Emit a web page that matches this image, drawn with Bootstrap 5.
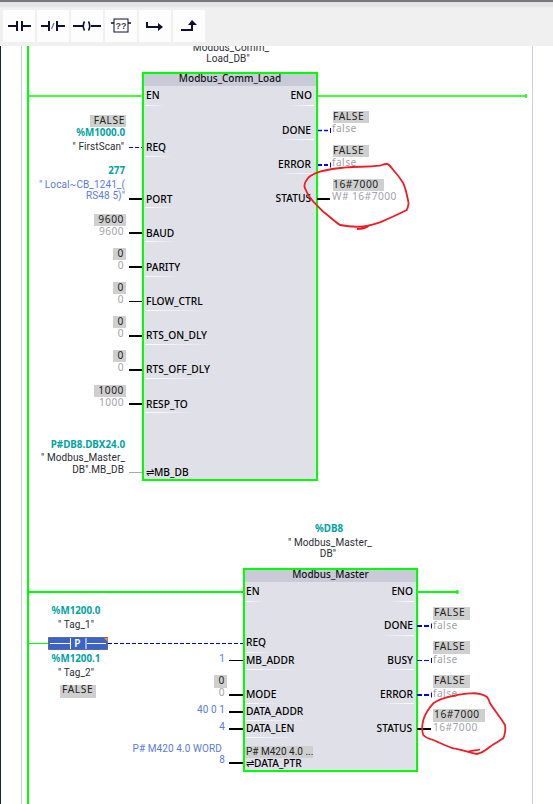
<!doctype html>
<html lang="en"><head><meta charset="utf-8"><title>Modbus FBD</title>
<link href="https://cdn.jsdelivr.net/npm/bootstrap@5.3.0/dist/css/bootstrap.min.css" rel="stylesheet">
<style>
html,body{height:804px;overflow:hidden;background:#fff}
.top-strip{height:7px;background:#e4e4e6;border-top:2px solid #77787c}
.tool-bar{height:39px;padding:3px 3px 0;background:#f0f0f0;position:relative;z-index:3}
.tool-btn{width:32px;height:32px;padding:0;border:0;border-radius:0;background:#fdfdfd;display:flex;align-items:center;justify-content:center}
.tool-group{gap:2px}
.canvas-area{height:758px;position:relative;overflow:hidden;background:#fff;border-left:1px solid #1a2233}
.fbd-block{position:absolute;border:2px solid #00ff00;background:#e0e0e8}
#blockA{left:141px;top:26px;width:176px;height:409px}
#blockB{left:242px;top:522px;width:175px;height:204px}
.fbd-head{height:12px;background:#c8cad8;text-align:center;font:500 10px/9px "Noto Sans",sans-serif;color:#111}
.wires{position:absolute;left:-1px;top:-46px;width:553px;height:804px}
.wires text{font:10.2px "Noto Sans",sans-serif;fill:#111}
.wires .pin{font-weight:500;fill:#000}
.wires .addr{font:700 9.8px "Noto Sans",sans-serif;fill:#00a3a3}
.wires .sym{font:10px Roboto,sans-serif;fill:#2c2c34;letter-spacing:.1px}
.wires .lit{font:10px Roboto,sans-serif;fill:#5a7be0;letter-spacing:.1px}
.wires .cur{fill:#a2a2aa;letter-spacing:.45px}
.wires .val{fill:#222;letter-spacing:.6px}
.wires .cut{font:10px Roboto,sans-serif;fill:#222}
.wires .plc{fill:#fff;font-weight:600}
</style></head><body>
<div class="top-strip"></div>
<div class="tool-bar">
 <div class="d-flex tool-group">
 <button class="btn tool-btn" aria-label="NO contact"><svg width="26" height="14" viewBox="0 0 26 14"><path d="M2 7h9M11 2v10M16 2v10M16 7h9" stroke="#0d1030" stroke-width="2" fill="none"/></svg></button>
 <button class="btn tool-btn" aria-label="NC contact"><svg width="26" height="14" viewBox="0 0 26 14"><path d="M1 7h8M9 2v10M17 2v10M17 7h8" stroke="#0d1030" stroke-width="2" fill="none"/><path d="M11.500 10l2.500-6" stroke="#777" stroke-width="1.300"/></svg></button>
 <button class="btn tool-btn" aria-label="Coil"><svg width="30" height="14" viewBox="0 0 30 14"><path d="M1 7h10M19 7h10" stroke="#0d1030" stroke-width="2" fill="none"/><path d="M12.500 2.500q-2.500 4.500 0 9M16.500 2.500q2.500 4.500 0 9" stroke="#0d1030" stroke-width="1.600" fill="none"/></svg></button>
 <button class="btn tool-btn" aria-label="Empty box"><svg width="20" height="16" viewBox="0 0 20 16"><path d="M0 5h3M17 5h3" stroke="#0d1030" stroke-width="1.500"/><rect x="3" y="1" width="14" height="13" fill="#fff" stroke="#0d1030"/><text x="10" y="11" text-anchor="middle" font-family="Liberation Sans" font-size="9" font-weight="700" fill="#444">??</text></svg></button>
 <button class="btn tool-btn" aria-label="Open branch"><svg width="18" height="12" viewBox="0 0 18 12"><path d="M1 2v5h12" stroke="#0d1030" stroke-width="2" fill="none"/><path d="M12 3l5 4-5 4z" fill="#0d1030"/></svg></button>
 <button class="btn tool-btn" aria-label="Close branch"><svg width="18" height="14" viewBox="0 0 18 14"><path d="M1 11h11V4" stroke="#0d1030" stroke-width="2" fill="none"/><path d="M8 6l4-5 5 5z" fill="#0d1030"/></svg></button>
 </div>
</div>
<div class="canvas-area">
 <div id="blockA" class="fbd-block"><div class="fbd-head">Modbus_Comm_Load</div></div>
 <div id="blockB" class="fbd-block"><div class="fbd-head">Modbus_Master</div></div>
 <svg class="wires" viewBox="0 0 553 804" aria-label="Function block network">
  <defs><linearGradient id="fade"><stop offset="0" stop-color="#fff"/><stop offset="1" stop-color="#fff" stop-opacity="0"/></linearGradient>
  <linearGradient id="fadeR"><stop offset="0" stop-color="#fff" stop-opacity="0"/><stop offset="1" stop-color="#fff"/></linearGradient></defs>
  <path d="M21.500 46V804M532.500 46V804" stroke="#c9c9ea" stroke-width="1"/>
  <path d="M28 46V804" stroke="#00ff00" stroke-width="2"/>
  <path d="M28 96H142M317 96H526M526 94V98" stroke="#00ff00" stroke-width="1.600"/>
  <path d="M28 592H243M417 592H458" stroke="#00ff00" stroke-width="2"/><path d="M457.500 590V594" stroke="#00ff00" stroke-width="2"/>
  <g fill="url(#fade)">
   <rect x="145" y="105" width="20" height="1"/><rect x="145" y="156" width="28" height="1"/><rect x="145" y="207" width="30" height="1"/><rect x="145" y="241" width="30" height="1"/><rect x="145" y="276" width="35" height="1"/><rect x="145" y="310" width="60" height="1"/><rect x="145" y="344" width="68" height="1"/><rect x="145" y="378" width="70" height="1"/><rect x="145" y="412" width="50" height="1"/>
   <rect x="245" y="601" width="18" height="1"/><rect x="245" y="652" width="28" height="1"/><rect x="245" y="669" width="55" height="1"/><rect x="245" y="703" width="35" height="1"/><rect x="245" y="720" width="60" height="1"/><rect x="245" y="737" width="50" height="1"/>
  </g>
  <g fill="url(#fadeR)">
   <rect x="290" y="105" width="24" height="1"/><rect x="280" y="139" width="34" height="1"/><rect x="280" y="173" width="34" height="1"/>
   <rect x="390" y="601" width="24" height="1"/><rect x="380" y="635" width="34" height="1"/><rect x="380" y="669" width="34" height="1"/><rect x="380" y="703" width="34" height="1"/>
  </g>
  <rect x="90" y="115" width="36" height="12" fill="#cfcfcf"/>
  <text class="val" x="125" y="124" text-anchor="end">FALSE</text>
  <text class="addr" x="125" y="136" text-anchor="end">%M1000.0</text>
  <text class="sym" x="124" y="150" text-anchor="end">" FirstScan"</text>
  <path d="M129 147.500H142" stroke="#0000cc" stroke-dasharray="4 2"/>
  <text class="pin" x="146" y="151">REQ</text>
  <text class="addr" x="125" y="174" text-anchor="end">277</text>
  <text class="lit" x="125" y="188" text-anchor="end">" Local~CB_1241_(</text>
  <text class="lit" x="125" y="199" text-anchor="end">RS48 5)"</text>
  <path d="M129 199H142" stroke="#000" stroke-width="2"/><text class="pin" x="146" y="203">PORT</text>
  <rect x="94" y="214" width="32" height="12" fill="#cfcfcf"/><text class="val" x="124" y="223" text-anchor="end">9600</text><text class="cur" x="124" y="235" text-anchor="end">9600</text>
  <path d="M129 233H142" stroke="#000" stroke-width="2"/><text class="pin" x="146" y="237">BAUD</text>
  <rect x="113" y="248" width="13" height="12" fill="#cfcfcf"/><text class="val" x="124" y="257" text-anchor="end">0</text><text class="cur" x="124" y="269" text-anchor="end">0</text>
  <path d="M129 267H142" stroke="#000" stroke-width="2"/><text class="pin" x="146" y="271">PARITY</text>
  <rect x="113" y="282" width="13" height="12" fill="#cfcfcf"/><text class="val" x="124" y="291" text-anchor="end">0</text><text class="cur" x="124" y="303" text-anchor="end">0</text>
  <path d="M129 301.500H142" stroke="#000"/><text class="pin" x="146" y="305">FLOW_CTRL</text>
  <rect x="113" y="316" width="13" height="12" fill="#cfcfcf"/><text class="val" x="124" y="325" text-anchor="end">0</text><text class="cur" x="124" y="337" text-anchor="end">0</text>
  <path d="M129 336H142" stroke="#000" stroke-width="2"/><text class="pin" x="146" y="339">RTS_ON_DLY</text>
  <rect x="113" y="350" width="13" height="12" fill="#cfcfcf"/><text class="val" x="124" y="359" text-anchor="end">0</text><text class="cur" x="124" y="371" text-anchor="end">0</text>
  <path d="M129 370H142" stroke="#000" stroke-width="2"/><text class="pin" x="146" y="373">RTS_OFF_DLY</text>
  <rect x="94" y="385" width="32" height="12" fill="#cfcfcf"/><text class="val" x="124" y="394" text-anchor="end">1000</text><text class="cur" x="124" y="406" text-anchor="end">1000</text>
  <path d="M129 404H142" stroke="#000" stroke-width="2"/><text class="pin" x="146" y="408">RESP_TO</text>
  <text class="addr" x="125" y="448" text-anchor="end">P#DB8.DBX24.0</text>
  <text class="sym" x="125" y="461" text-anchor="end">" Modbus_Master_</text>
  <text class="sym" x="124" y="473" text-anchor="end">DB".MB_DB</text>
  <path d="M129 472.500H142" stroke="#aaa"/><text class="pin" x="146" y="476">⇌MB_DB</text>
  <text class="pin" x="312" y="99" text-anchor="end">ENO</text>
  <text class="pin" x="311" y="134" text-anchor="end">DONE</text>
  <path d="M318 130.500H330" stroke="#0000ee" stroke-width="1.600" stroke-dasharray="4 2"/><path d="M330.500 128V133" stroke="#0000ee"/>
  <rect x="333" y="111" width="36" height="12" fill="#cfcfcf"/><text class="val" x="333" y="120">FALSE</text><text class="cur" x="332" y="132">false</text>
  <text class="pin" x="311" y="168" text-anchor="end">ERROR</text>
  <path d="M318 165H330" stroke="#0000ee" stroke-width="2" stroke-dasharray="4 2"/><path d="M330.500 162.500V167.500" stroke="#0000ee"/>
  <rect x="333" y="145" width="36" height="12" fill="#cfcfcf"/><text class="val" x="333" y="154">FALSE</text><text class="cur" x="332" y="166">false</text>
  <text class="pin" x="311" y="202" text-anchor="end">STATUS</text>
  <path d="M317 199H330" stroke="#000" stroke-width="2"/>
  <rect x="333" y="179" width="51" height="12" fill="#cfcfcf"/><text class="val" x="333" y="188">16#7000</text><text class="cur" x="332" y="200">W# 16#7000</text>
  <text class="addr" x="329" y="532" text-anchor="middle">%DB8</text>
  <text class="sym" x="330" y="546" text-anchor="middle">" Modbus_Master_</text>
  <text class="sym" x="328" y="557" text-anchor="middle">DB"</text>
  <text class="sym" x="231" y="51" text-anchor="middle">Modbus_Comm_</text>
  <text class="sym" x="228" y="62" text-anchor="middle">Load_DB"</text>
  <text class="addr" x="76" y="614" text-anchor="middle">%M1200.0</text>
  <text class="sym" x="76" y="628" text-anchor="middle">" Tag_1"</text>
  <path d="M28 643.500H48" stroke="#00ff00"/>
  <path d="M108 643.500H243" stroke="#0000cc" stroke-dasharray="4 2"/>
  <rect x="48.500" y="637.500" width="59" height="12" fill="#3a62c9" stroke="#223" stroke-dasharray="1 1"/>
  <path d="M50 643.500H70M87 643.500H106M70.500 638V649M86 638V649" stroke="#fff"/>
  <path d="M104 638h3.500v3.500z" fill="#f59a23"/>
  <text class="plc" x="77.500" y="647" text-anchor="middle">P</text>
  <text class="addr" x="76" y="662" text-anchor="middle">%M1200.1</text>
  <text class="sym" x="76" y="676" text-anchor="middle">" Tag_2"</text>
  <rect x="60" y="685" width="36" height="13" fill="#cfcfcf"/><text class="val" x="62" y="693">FALSE</text>
  <text class="pin" x="246" y="595">EN</text><text class="pin" x="146" y="99">EN</text>
  <text class="pin" x="246" y="646">REQ</text>
  <text class="lit" x="225" y="662" text-anchor="end">1</text><path d="M229 660.500H243" stroke="#000"/><text class="pin" x="246" y="664">MB_ADDR</text>
  <rect x="214" y="675" width="13" height="13" fill="#cfcfcf"/><text class="val" x="225" y="684" text-anchor="end">0</text><text class="cur" x="225" y="696" text-anchor="end">0</text>
  <path d="M229 695H243" stroke="#000" stroke-width="2"/><text class="pin" x="246" y="698">MODE</text>
  <text class="lit" x="225" y="713" text-anchor="end">40 0 1</text><path d="M229 712H243" stroke="#000" stroke-width="2"/><text class="pin" x="246" y="715">DATA_ADDR</text>
  <text class="lit" x="225" y="730" text-anchor="end">4</text><path d="M229 729H243" stroke="#000" stroke-width="2"/><text class="pin" x="246" y="732">DATA_LEN</text>
  <text class="lit" x="222" y="752" text-anchor="end">P# M420 4.0 WORD</text><text class="lit" x="225" y="763" text-anchor="end">8</text>
  <path d="M229 763H243" stroke="#000" stroke-width="2"/>
  <rect x="245" y="746" width="68" height="12" fill="#cfcfcf"/><text class="cut" x="246" y="755">P# M420 4.0 ...</text>
  <text class="pin" x="246" y="767">⇌DATA_PTR</text>
  <text class="pin" x="413" y="595" text-anchor="end">ENO</text>
  <text class="pin" x="413" y="629" text-anchor="end">DONE</text>
  <path d="M417 626H431" stroke="#0000ee" stroke-width="2" stroke-dasharray="5 2"/><path d="M431.500 623.500V628.500" stroke="#0000ee"/>
  <rect x="433" y="607" width="37" height="13" fill="#cfcfcf"/><text class="val" x="434" y="616">FALSE</text><text class="cur" x="433" y="629">false</text>
  <text class="pin" x="413" y="664" text-anchor="end">BUSY</text>
  <path d="M417 660.500H431" stroke="#0000ee" stroke-dasharray="5 2"/><path d="M431.500 658V663" stroke="#0000ee"/>
  <rect x="433" y="641" width="37" height="13" fill="#cfcfcf"/><text class="val" x="434" y="650">FALSE</text><text class="cur" x="433" y="663">false</text>
  <text class="pin" x="413" y="698" text-anchor="end">ERROR</text>
  <path d="M417 695H431" stroke="#0000ee" stroke-width="2" stroke-dasharray="5 2"/><path d="M431.500 692.500V697.500" stroke="#0000ee"/>
  <rect x="433" y="675" width="37" height="13" fill="#cfcfcf"/><text class="val" x="434" y="684">FALSE</text><text class="cur" x="433" y="697">false</text>
  <text class="pin" x="412" y="732" text-anchor="end">STATUS</text>
  <path d="M417 729H431" stroke="#000" stroke-width="2"/>
  <rect x="433" y="709" width="52" height="13" fill="#cfcfcf"/><text class="val" x="434" y="718">16#7000</text><text class="cur" x="433" y="731">16#7000</text>
  <path d="M386.700 164C384 164 382 165 380 165.700C368 167 358 166.500 346.700 167.300C337 168.500 328 169 320 171.700C313 174 308 177 306.700 180C304.500 183 304 186 305 188.300C307 194 310 198 313.300 201.700C317 205 320 209 323.300 211.700C329 216 334 221 340 225C347 226.500 353 227 360 226.700C368 226 374 224 380 222.300C390 218 399 214 406.700 210C408 207 409 204 408.300 201.700C407 195 406 189 403.300 183.300C400 178 397 174 393.300 170C391 167 389 164 386.700 164ZM357 229C362 229 366 228.500 370 225" fill="none" stroke="#ee1c25" stroke-width="1.800"/>
  <path d="M471.700 693.300C464 693 457 695 450 696.700C444 698 438 700 433.300 703.300C429 708 425 714 423.300 720C422 725 421.500 730 423.300 735C426 738 430 739 433.300 740C440 743 446 746 453.300 748.300C461 749 469 753 476.700 754C482 753 486 750 490 746.700C494 744 499 741 503.300 738.300C505 734 506 730 505 725C501 718 495 711 490 703.300C489 700 488 698 486.700 696.700C482 694 477 693 471.700 693.300ZM467 752C472 750.500 476 750.500 480 749.500" fill="none" stroke="#ee1c25" stroke-width="1.800"/>
 </svg>
</div>
<script src="https://cdn.jsdelivr.net/npm/bootstrap@5.3.0/dist/js/bootstrap.bundle.min.js"></script>
</body></html>
